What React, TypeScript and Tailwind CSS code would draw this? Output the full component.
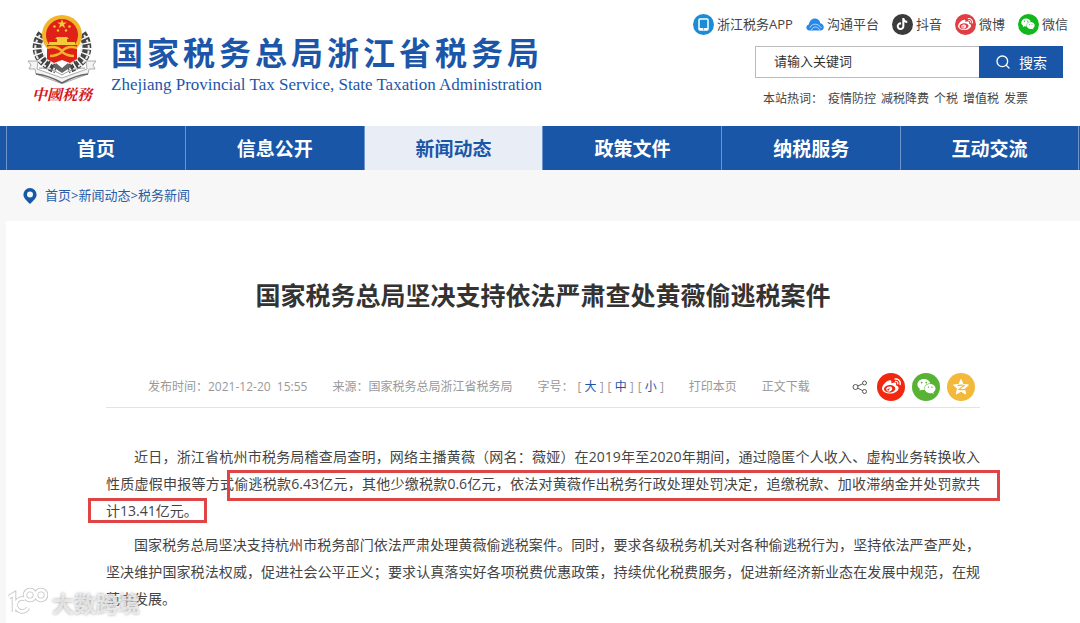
import type { ReactNode } from 'react';
import { Search } from 'lucide-react';
import { FaTiktok, FaWeibo, FaWeixin } from 'react-icons/fa';

const NAV_ITEMS = ['首页', '信息公开', '新闻动态', '政策文件', '纳税服务', '互动交流'];
const ACTIVE_NAV = '新闻动态';
const HOT_WORDS = ['疫情防控', '减税降费', '个税', '增值税', '发票'];

function App() {
  return (
    <div className="relative min-h-screen overflow-hidden bg-[#f7f7f7] font-['Open_Sans','Noto_Sans_CJK_SC',sans-serif] text-[#444]">
      <Header />
      <Nav />
      <Breadcrumb />
      <Article />
      <Watermark />
    </div>
  );
}

function Header() {
  return (
    <header className="flex h-[126px] justify-between bg-white pr-3 pl-6">
      <a href="#" className="flex items-start gap-[11px]">
        <div className="flex w-[76px] flex-col items-center pt-[14px]">
          <Emblem />
          <span className="font-['Noto_Serif_CJK_SC','Noto_Sans_CJK_SC',serif] text-[15px] leading-5 font-bold text-[#d5161c] italic">
            中國税務
          </span>
        </div>
        <div className="pt-8 text-[#1c56a8]">
          <h1 className="text-[32px] leading-[42px] font-bold tracking-[4px] whitespace-nowrap">
            国家税务总局浙江省税务局
          </h1>
          <p className="font-['Liberation_Serif',serif] text-[17px] leading-[22px] whitespace-nowrap">
            Zhejiang Provincial Tax Service, State Taxation Administration
          </p>
        </div>
      </a>

      <div className="flex flex-col items-end pt-[13px]">
        <div className="flex gap-[13px] text-[13px] leading-[22px]">
          <QuickLink label="浙江税务APP" icon={<AppIcon />} />
          <QuickLink label="沟通平台" icon={<CloudIcon />} />
          <QuickLink label="抖音" icon={<Round className="bg-[#3b3b3b]"><FaTiktok size={12} /></Round>} />
          <QuickLink label="微博" icon={<Round className="bg-[#e23d43]"><FaWeibo size={15} /></Round>} />
          <QuickLink label="微信" icon={<Round className="bg-[#12b71c]"><FaWeixin size={14} /></Round>} />
        </div>
        <form className="mt-[11px] mr-[5px] flex h-8 w-[308px]">
          <input
            type="text"
            aria-label="请输入关键词"
            placeholder="请输入关键词"
            className="w-0 flex-1 border border-r-0 border-[#bbb] bg-white px-[18px] text-[13px] placeholder:text-[#333]"
          />
          <button type="button" className="flex w-[84px] items-center justify-center gap-2 bg-[#1a56a8] text-[14px] text-white">
            <Search size={16} />
            搜索
          </button>
        </form>
        <p className="mt-3 mr-10 flex gap-[5px] text-[12px] leading-[18px]">
          本站热词：
          {HOT_WORDS.map((word) => (
            <a key={word} href="#">{word}</a>
          ))}
        </p>
      </div>
    </header>
  );
}

function Nav() {
  return (
    <nav className="grid h-11 grid-cols-6 bg-[#1a56a8] pr-px pl-[6px]">
      {NAV_ITEMS.map((item) => (
        <a
          key={item}
          href="#"
          className={`flex items-center justify-center border-l border-[#6d95cb] pt-[2px] text-[19px] font-bold last:border-r ${
            item === ACTIVE_NAV ? 'bg-[#e8edf6] text-[#1a56a8]' : 'text-white'
          }`}
        >
          {item}
        </a>
      ))}
    </nav>
  );
}

function Breadcrumb() {
  return (
    <div className="flex h-[51px] items-center gap-2 pl-[23px] text-[13px] text-[#2a5da8]">
      <svg width="14" height="16" viewBox="0 0 14 16" aria-hidden="true">
        <path fill="#1558a8" fillRule="evenodd" d="M7 0a6.6 6.6 0 0 1 6.6 6.6C13.600 10.500 9.500 13.500 7 16 4.500 13.500.4 10.500.4 6.600A6.600 6.600 0 0 1 7 0Zm0 3.600a3 3 0 1 0 0 6 3 3 0 0 0 0-6Z" />
      </svg>
      <div>
        <a href="#">首页</a>&gt;<a href="#">新闻动态</a>&gt;<a href="#">税务新闻</a>
      </div>
    </div>
  );
}

function Article() {
  return (
    <main className="ml-[6px] min-h-[402px] bg-white pr-[100px] pl-[100px]">
      <h2 className="pt-14 text-center text-[25px] leading-9 font-bold text-[#333]">
        国家税务总局坚决支持依法严肃查处黄薇偷逃税案件
      </h2>

      <div className="mt-[53px] flex h-[42px] items-center gap-[25px] border-b border-[#e3e3e3] pr-[5px] pl-[42px] text-[12px] whitespace-nowrap text-[#999]">
        <span>发布时间：2021-12-20&nbsp;&nbsp;15:55</span>
        <span>来源：国家税务总局浙江省税务局</span>
        <span className="flex gap-1">
          字号：
          {['大', '中', '小'].map((size) => (
            <span key={size}>
              [ <button type="button" className="text-[#1a56a8]">{size}</button> ]
            </span>
          ))}
        </span>
        <a href="#">打印本页</a>
        <a href="#">正文下载</a>
        <ShareBar />
      </div>

      <div className="relative pt-[35px] text-justify text-[14px] leading-[27px] text-[#444]">
        <p className="indent-7">
          近日，浙江省杭州市税务局稽查局查明，网络主播黄薇（网名：薇娅）在2019年至2020年期间，通过隐匿个人收入、虚构业务转换收入性质虚假申报等方式偷逃税款6.43亿元，其他少缴税款0.6亿元，依法对黄薇作出税务行政处理处罚决定，追缴税款、加收滞纳金并处罚款共<span className="whitespace-nowrap">计13.41亿元。</span>
        </p>
        <p className="mt-[7px] indent-7">
          国家税务总局坚决支持杭州市税务部门依法严肃处理黄薇偷逃税案件。同时，要求各级税务机关对各种偷逃税行为，坚持依法严查严处，坚决维护国家税法权威，促进社会公平正义；要求认真落实好各项税费优惠政策，持续优化税费服务，促进新经济新业态在发展中规范，在规范中发展。
        </p>
        {/* red callouts round the amounts */}
        <div className="absolute top-[62px] -right-5 left-[121px] h-[31px] border-[3px] border-[#e04545]" />
        <div className="absolute top-[90px] -left-[18px] h-[25px] w-[119px] border-[3px] border-[#e04545]" />
      </div>
    </main>
  );
}

function ShareBar() {
  return (
    <div className="ml-auto flex items-center gap-[7px] text-white">
      <svg width="16" height="16" viewBox="0 0 16 16" fill="none" stroke="#555" aria-hidden="true">
        <circle cx="3.500" cy="8" r="2.500" />
        <circle cx="12.500" cy="4" r="2" />
        <circle cx="12.500" cy="12.500" r="2" />
        <path d="m5.800 7 4.800-2.200M5.800 9.200l4.800 2.400" />
      </svg>
      <button type="button" aria-label="微博" className="ml-[2px] flex size-7 items-center justify-center rounded-full bg-[#f1270f]">
        <FaWeibo size={19} />
      </button>
      <button type="button" aria-label="微信" className="flex size-7 items-center justify-center rounded-full bg-[#58b335]">
        <FaWeixin size={19} />
      </button>
      <button type="button" aria-label="QQ空间" className="flex size-7 items-center justify-center rounded-full bg-[#f3b93b]">
        <svg width="18" height="18" viewBox="0 0 18 18" aria-hidden="true">
          <path fill="#fff" stroke="#fff" strokeLinejoin="round" d="m9 1.500 2.200 5 5.300.5-4 3.600 1.200 5.400L9 13.200 4.300 16l1.200-5.400-4-3.600 5.300-.5Z" />
          <path fill="none" stroke="#f3b93b" strokeWidth="1.200" d="M5.500 7.600c2.200-.5 4.600-.5 6.500-.1L7 11.400c2 .4 4.500.5 7.500-.3" />
        </svg>
      </button>
    </div>
  );
}

function QuickLink({ label, icon }: { label: string; icon: ReactNode }) {
  return (
    <a href="#" className="flex items-center gap-[3px] whitespace-nowrap">
      {icon}
      {label}
    </a>
  );
}

function Round({ className, children }: { className: string; children: ReactNode }) {
  return (
    <span className={`flex size-[21px] items-center justify-center rounded-full text-white ${className}`}>
      {children}
    </span>
  );
}

function AppIcon() {
  return (
    <Round className="bg-[#1b8dd6]">
      <svg width="11" height="13" viewBox="0 0 11 13" aria-hidden="true">
        <rect x="1" y="1" width="9" height="11" rx="1" fill="none" stroke="#fff" strokeWidth="1.500" />
        <path d="M1 10h9v2H1z" fill="#fff" />
        <circle cx="5.500" cy="11" r=".7" fill="#1b8dd6" />
      </svg>
    </Round>
  );
}

function CloudIcon() {
  return (
    <svg width="18" height="13" viewBox="0 0 18 13" aria-hidden="true">
      <path fill="#2589ec" d="M3.500 12.500C-.5 12-.7 7.500 2.800 6.500 3.500 2 7-.2 10.500.8c2.300.7 3.500 2.300 3.800 4.500 4.700 1 4.500 6.900.2 7.200Z" />
      <path fill="none" stroke="#d5e8fc" strokeWidth=".8" d="M4 9.500c2-4.500 8-4.500 11.500.5M5.500 12c1.500-4 6-4 8.500 0" />
    </svg>
  );
}

function Emblem() {
  return (
    <svg width="70" height="70" viewBox="0 0 70 70" aria-hidden="true">
      {/* wheat ears */}
      <g fill="none" stroke="#444" strokeWidth="9" strokeDasharray="4 1.500">
        <path d="M15 20C6 32 9 48 29 55" />
        <path d="M55 20c9 12 6 28-14 35" />
      </g>
      <g fill="none" stroke="#e8e8e8" strokeWidth="2" strokeDasharray="3.500 2">
        <path d="M13 21C4 33 7 50 28 57" />
        <path d="M57 21c9 12 6 29-15 36" />
        <path d="M18 24c-6 11-2 21 12 28" />
        <path d="M52 24c6 11 2 21-12 28" />
      </g>
      {/* ribbon */}
      <path fill="#f4f4f4" stroke="#999" strokeWidth=".8" d="M1 47h10l-1 8 25 9 25-9-1-8h10l-3 4 2 4h-6l-1 5-24 9h-4L9 60l-1-5H2l2-4Z" />
      <path fill="none" stroke="#666" strokeWidth="1.500" d="M9 60c10 1 19 5 26 9 7-4 16-8 26-9" />
      <path fill="none" stroke="#999" d="M12 54c9 0 17 3 23 7 6-4 14-7 23-7" />
      <path fill="#666" d="m29 49 6 5 6-5 3 4-9 6-9-6Z" />
      {/* national emblem */}
      <circle cx="35" cy="21" r="20" fill="#f2b52c" />
      <circle cx="35" cy="21" r="16" fill="#df2118" />
      <path fill="#df2118" d="M20 31h30v14l-7 4-8-3-8 3-7-4Z" />
      <path fill="#f6c83c" d="m35 5 1.200 3.400h3.600L37 10.600l1 3.400-3-2-3 2 1-3.400-2.800-2.200h3.600Z" />
      <g fill="#f6c83c">
        <circle cx="27.500" cy="12.500" r="1.200" />
        <circle cx="31" cy="16.500" r="1.200" />
        <circle cx="39" cy="16.500" r="1.200" />
        <circle cx="42.500" cy="12.500" r="1.200" />
        <path d="M30 23h10l2 2h-2v3h8v3H22v-3h8v-3h-2Z" />
      </g>
      <path fill="none" stroke="#f2b52c" strokeWidth="2.500" d="M20 34c6-2 11-1 15 3 4-4 9-5 15-3M23 42c5 0 8-1 12-4 4 3 7 4 12 4" />
    </svg>
  );
}

function Watermark() {
  return (
    <div className="absolute top-[587px] left-2 flex items-center gap-1 text-[22px] leading-8 font-bold text-white/65 [text-shadow:0_0_3px_#999]">
      <svg width="40" height="32" viewBox="0 0 40 32" fill="none" aria-hidden="true">
        <g stroke="#c4c4c4" strokeWidth="4.500">
          <path d="m1 10 5-3v18M20 21a6.500 6.500 0 1 1-3-9" />
          <circle cx="22" cy="8" r="5" />
          <circle cx="33" cy="8" r="5" />
        </g>
        <g stroke="#fff" strokeWidth="2.800">
          <path d="m1 10 5-3v18M20 21a6.500 6.500 0 1 1-3-9" />
          <circle cx="22" cy="8" r="5" />
          <circle cx="33" cy="8" r="5" />
        </g>
      </svg>
      大数跨境
    </div>
  );
}

export default App;
